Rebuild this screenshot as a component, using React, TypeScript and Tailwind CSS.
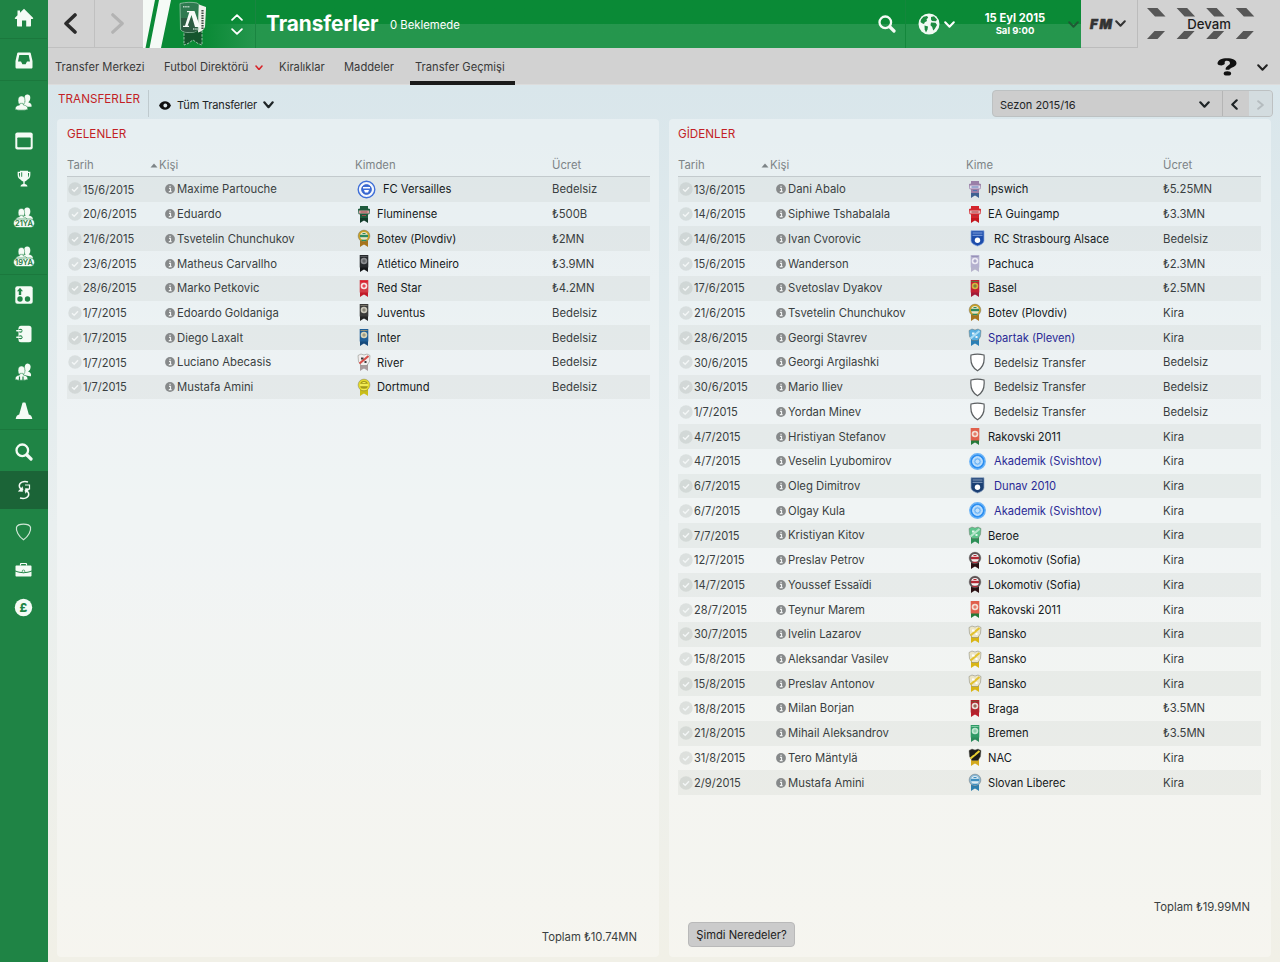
import React from "react";
import clsx from "clsx";

type CrestShape = "rect" | "round" | "tee" | "shield" | "disc" | "badge" | "blank";
type Club = { shape: CrestShape; main: string; accent: string; tail: string; band?: string };

const clubs: Record<string, Club> = {
  "FC Versailles": { shape: "disc", main: "#3f6fd8", accent: "#e8effb", tail: "#2456c4", band: "#2456c4" },
  Fluminense: { shape: "tee", main: "#1f5a3c", accent: "#d8a5a5", tail: "#123c2a", band: "#9c4a4a" },
  "Botev (Plovdiv)": { shape: "round", main: "#c9a227", accent: "#e9e2c4", tail: "#a8741c", band: "#2c8a5e" },
  "Atlético Mineiro": { shape: "rect", main: "#26292c", accent: "#8b8d90", tail: "#141618", band: "#55585b" },
  "Red Star": { shape: "rect", main: "#d33a45", accent: "#f6e3e3", tail: "#c11a28", band: "#e11b2b" },
  Juventus: { shape: "rect", main: "#3b3b3a", accent: "#c9c6b8", tail: "#252525", band: "#777468" },
  Inter: { shape: "rect", main: "#1f5e96", accent: "#d9d4b8", tail: "#164a7b", band: "#8f8e78" },
  River: { shape: "shield", main: "#f1eeee", accent: "#3f3a3d", tail: "#a89a9c", band: "#d8504a" },
  Dortmund: { shape: "round", main: "#e5da28", accent: "#a39a1c", tail: "#c9bd18", band: "#f1ea55" },
  Ipswich: { shape: "tee", main: "#9a7fa8", accent: "#e3dcee", tail: "#3f6291", band: "#5377b1" },
  "EA Guingamp": { shape: "tee", main: "#d4252c", accent: "#e8bcbc", tail: "#c3161d", band: "#a7353a" },
  "RC Strasbourg Alsace": { shape: "badge", main: "#1d4dab", accent: "#ffffff", tail: "#1d4dab", band: "#86a6e0" },
  Pachuca: { shape: "rect", main: "#b5b1cf", accent: "#eceaf4", tail: "#b6b3cc", band: "#9692b8" },
  Basel: { shape: "rect", main: "#c22032", accent: "#d6b13e", tail: "#a11a36", band: "#5f7a3c" },
  "Spartak (Pleven)": { shape: "shield", main: "#58aee0", accent: "#e7f4fb", tail: "#2b7fb5", band: "#a9dcf5" },
  "Bedelsiz Transfer": { shape: "blank", main: "#ffffff", accent: "#5b5f61", tail: "#ffffff" },
  "Rakovski 2011": { shape: "rect", main: "#e0604c", accent: "#f3dfd3", tail: "#257a3a", band: "#e0604c" },
  "Akademik (Svishtov)": { shape: "disc", main: "#2b8ef0", accent: "#9fd0fb", tail: "#2b8ef0" },
  "Dunav 2010": { shape: "badge", main: "#1a3f73", accent: "#ffffff", tail: "#1a3f73", band: "#8ea4c2" },
  Beroe: { shape: "shield", main: "#5fc48c", accent: "#e2f5ea", tail: "#2c8f56", band: "#b5e5ca" },
  "Lokomotiv (Sofia)": { shape: "round", main: "#5e5254", accent: "#f3efef", tail: "#2a1013", band: "#b32a36" },
  Bansko: { shape: "shield", main: "#ece5c6", accent: "#ffffff", tail: "#d9b514", band: "#e3c22d" },
  Braga: { shape: "rect", main: "#b0252e", accent: "#eadcd8", tail: "#b9202c", band: "#7f4b33" },
  Bremen: { shape: "rect", main: "#2f9a66", accent: "#bfe6d0", tail: "#2a8a5a", band: "#7cc9a0" },
  NAC: { shape: "shield", main: "#1d1d1b", accent: "#1d1d1b", tail: "#d3a91e", band: "#e8cf32" },
  "Slovan Liberec": { shape: "round", main: "#8ab8d4", accent: "#dcebf4", tail: "#2d7fb0", band: "#3f8fc0" },
};

const isWide = (s: CrestShape) => s === "disc" || s === "badge" || s === "blank";

function Crest({ name }: { name: string }) {
  const c = clubs[name];
  if (c.shape === "disc") {
    const ring = !c.band;
    return (
      <svg width="19" height="19" viewBox="0 0 19 19" className="shrink-0">
        <circle cx="9.5" cy="9.5" r={ring ? 7.7 : 8.3} fill={ring ? c.main : "#f3f7fd"} stroke={ring ? "#6cb4f7" : c.main} strokeWidth="1.4" />
        <circle cx="9.5" cy="9.5" r="4.8" fill={ring ? c.accent : c.main} stroke={ring ? "#e4f2fe" : "#2456c4"} strokeWidth="1" />
        {ring ? (
          <circle cx="9.5" cy="9.5" r="2.6" fill="#bfe0fc" stroke="#4ea2f2" strokeWidth="0.8" />
        ) : (
          <path d="M6 7h7v1.600H6zM7 10h5l-1 2.6H8z" fill="#fff" />
        )}
      </svg>
    );
  }
  if (c.shape === "badge") {
    return (
      <svg width="19" height="19" viewBox="0 0 19 19" className="shrink-0">
        <path d="M3 1.800h13v9.500c0 3-3 4.500-6.500 5.700C6 15.800 3 14.300 3 11.300z" fill={c.main} stroke={c.band} strokeWidth="0.7" />
        <path d="M4.500 4h10M4.500 6.300h10" stroke={c.band} strokeWidth="1" />
        <circle cx="9.500" cy="11.300" r="2.700" fill={c.accent} />
      </svg>
    );
  }
  if (c.shape === "blank") {
    return (
      <svg width="19" height="19" viewBox="0 0 19 19" className="shrink-0">
        <path d="M3 2c4-1.200 9-1.200 13 0 .7 6-.7 12.500-6.500 15.800C3.700 14.500 2.300 8 3 2z" fill="#fff" stroke={c.accent} strokeWidth="1.200" />
      </svg>
    );
  }
  return (
    <svg width="14" height="19" viewBox="0 0 14 19" className="shrink-0">
      <path d="M3 8h8v10l-1.800-1.200L7 15.500l-2.200 1.300L3 18z" fill={c.tail} />
      {c.shape === "rect" && (
        <g>
          <path d="M2.700 1h8.600v12.500H2.700z" fill={c.main} />
          <circle cx="7" cy="7" r="3.300" fill={c.accent} />
          <path d="M3.500 2.500h7M7 5.200v3.600M5.200 7h3.600" stroke={c.band} strokeWidth="1.100" fill="none" />
        </g>
      )}
      {c.shape === "round" && (
        <g>
          <circle cx="7" cy="7" r="5.900" fill={c.main} stroke="#555" strokeOpacity="0.500" strokeWidth="0.700" />
          <circle cx="7" cy="7" r="3.900" fill={c.accent} />
          <path d="M3 7h8" stroke={c.band} strokeWidth="2.400" />
          <path d="M5.500 4.500h3M4.500 11.300h5" stroke={c.band} strokeWidth="1.200" />
        </g>
      )}
      {c.shape === "tee" && (
        <g>
          <path d="M3 1h8v2.500l2 .5-.5 5-1.500.5v3.500H3V9.500L1.500 9 1 4l2-.5z" fill={c.main} />
          <path d="M2 5.500h10v3H2z" fill={c.accent} />
          <path d="M3.500 7h7M5 10.500h4" stroke={c.band} strokeWidth="1.200" />
        </g>
      )}
      {c.shape === "shield" && (
        <g>
          <path d="M1 2.500 4 1l3 1 3-1 3 1.500-.5 6L10 12.500H4L1.500 8.500z" fill={c.main} stroke="#6b6b60" strokeOpacity="0.600" strokeWidth="0.700" />
          <path d="M2.500 10.500 11.500 3" stroke={c.band} strokeWidth="2.200" />
          <path d="M4 4.500h2.500v2H4zM7.500 8h2v2h-2z" fill={c.accent} />
        </g>
      )}
    </svg>
  );
}

type Row = { date: string; name: string; club: string; fee: string; link?: boolean };

const r = (date: string, name: string, club: string, fee: string, link?: boolean): Row => ({ date, name, club, fee, link });

const incoming: Row[] = [
  r("15/6/2015", "Maxime Partouche", "FC Versailles", "Bedelsiz"),
  r("20/6/2015", "Eduardo", "Fluminense", "₺500B"),
  r("21/6/2015", "Tsvetelin Chunchukov", "Botev (Plovdiv)", "₺2MN"),
  r("23/6/2015", "Matheus Carvallho", "Atlético Mineiro", "₺3.9MN"),
  r("28/6/2015", "Marko Petkovic", "Red Star", "₺4.2MN"),
  r("1/7/2015", "Edoardo Goldaniga", "Juventus", "Bedelsiz"),
  r("1/7/2015", "Diego Laxalt", "Inter", "Bedelsiz"),
  r("1/7/2015", "Luciano Abecasis", "River", "Bedelsiz"),
  r("1/7/2015", "Mustafa Amini", "Dortmund", "Bedelsiz"),
];

const outgoing: Row[] = [
  r("13/6/2015", "Dani Abalo", "Ipswich", "₺5.25MN"),
  r("14/6/2015", "Siphiwe Tshabalala", "EA Guingamp", "₺3.3MN"),
  r("14/6/2015", "Ivan Cvorovic", "RC Strasbourg Alsace", "Bedelsiz"),
  r("15/6/2015", "Wanderson", "Pachuca", "₺2.3MN"),
  r("17/6/2015", "Svetoslav Dyakov", "Basel", "₺2.5MN"),
  r("21/6/2015", "Tsvetelin Chunchukov", "Botev (Plovdiv)", "Kira"),
  r("28/6/2015", "Georgi Stavrev", "Spartak (Pleven)", "Kira", true),
  r("30/6/2015", "Georgi Argilashki", "Bedelsiz Transfer", "Bedelsiz"),
  r("30/6/2015", "Mario Iliev", "Bedelsiz Transfer", "Bedelsiz"),
  r("1/7/2015", "Yordan Minev", "Bedelsiz Transfer", "Bedelsiz"),
  r("4/7/2015", "Hristiyan Stefanov", "Rakovski 2011", "Kira"),
  r("4/7/2015", "Veselin Lyubomirov", "Akademik (Svishtov)", "Kira", true),
  r("6/7/2015", "Oleg Dimitrov", "Dunav 2010", "Kira", true),
  r("6/7/2015", "Olgay Kula", "Akademik (Svishtov)", "Kira", true),
  r("7/7/2015", "Kristiyan Kitov", "Beroe", "Kira"),
  r("12/7/2015", "Preslav Petrov", "Lokomotiv (Sofia)", "Kira"),
  r("14/7/2015", "Youssef Essaïdi", "Lokomotiv (Sofia)", "Kira"),
  r("28/7/2015", "Teynur Marem", "Rakovski 2011", "Kira"),
  r("30/7/2015", "Ivelin Lazarov", "Bansko", "Kira"),
  r("15/8/2015", "Aleksandar Vasilev", "Bansko", "Kira"),
  r("15/8/2015", "Preslav Antonov", "Bansko", "Kira"),
  r("18/8/2015", "Milan Borjan", "Braga", "₺3.5MN"),
  r("21/8/2015", "Mihail Aleksandrov", "Bremen", "₺3.5MN"),
  r("31/8/2015", "Tero Mäntylä", "NAC", "Kira"),
  r("2/9/2015", "Mustafa Amini", "Slovan Liberec", "Kira"),
];

function Chevron({ dir, w, h, sw = 2, className }: { dir: "up" | "down" | "left" | "right"; w: number; h: number; sw?: number; className?: string }) {
  const p = sw / 2 + 0.2;
  const d = {
    down: `M${p} ${p}L${w / 2} ${h - p}L${w - p} ${p}`,
    up: `M${p} ${h - p}L${w / 2} ${p}L${w - p} ${h - p}`,
    left: `M${w - p} ${p}L${p} ${h / 2}L${w - p} ${h - p}`,
    right: `M${p} ${p}L${w - p} ${h / 2}L${p} ${h - p}`,
  }[dir];
  return (
    <svg width={w} height={h} viewBox={`0 0 ${w} ${h}`} className={clsx("shrink-0", className)}>
      <path d={d} fill="none" stroke="currentColor" strokeWidth={sw} strokeLinecap="round" strokeLinejoin="round" />
    </svg>
  );
}

function SearchGlyph() {
  return (
    <svg width="18" height="18" viewBox="0 0 18 18" className="shrink-0">
      <circle cx="7.300" cy="7.300" r="5.800" fill="none" stroke="#f4fbf5" strokeWidth="2.300" />
      <path d="M12 12l4 4" stroke="#f4fbf5" strokeWidth="3.200" strokeLinecap="round" />
    </svg>
  );
}

function Person({ x, y, s = 1 }: { x: number; y: number; s?: number }) {
  return (
    <g transform={`translate(${x} ${y}) scale(${s})`}>
      <ellipse cx="6" cy="4.300" rx="3.300" ry="4.300" />
      <path d="M0 12.500c0-2.500 1.500-3.500 4.300-4l.2-1.500h3l.2 1.500c2.800.5 4.300 1.500 4.300 4 0 1.300-12 1.300-12 0z" />
    </g>
  );
}

function People() {
  return (
    <svg width="18" height="17" viewBox="0 0 18 17" fill="#f4fbf5">
      <g transform="rotate(8 12 7)"><Person x={6.500} y={0.500} s={0.900} /></g>
      <g stroke="#1f8445" strokeWidth="0.500"><Person x={0.200} y={2} s={1.050} /></g>
    </svg>
  );
}

function YouthSquad({ label }: { label: string }) {
  return (
    <svg width="24" height="22" viewBox="0 0 24 22">
      <g fill="#f4fbf5">
        <Person x={9.500} y={0.500} s={0.950} />
        <g stroke="#1f8445" strokeWidth="0.500"><Person x={3.500} y={1.500} s={0.980} /></g>
        <rect x="1.500" y="12" width="21" height="8.500" rx="4.200" stroke="#1f8445" strokeWidth="0.600" />
      </g>
      <text x="12" y="18.900" fontSize="7.500" fontWeight="600" textAnchor="middle" fill="#1f7a40" fontFamily="Inter, sans-serif">{label}</text>
    </svg>
  );
}

function NavItem({ children, className }: { children: React.ReactNode; className?: string }) {
  return <div className={clsx("flex shrink-0 items-center justify-center", className)}>{children}</div>;
}

function Sidebar() {
  const w = "#f4fbf5";
  const g = "#1f8445";
  return (
    <nav className="flex h-[962px] w-12 shrink-0 flex-col bg-[#1f8445] pr-px">
      <NavItem className="h-[38px] pb-[3px]">
        <svg width="20" height="19" viewBox="0 0 20 19" fill={w}>
          <path d="M10 .8 19 9.800c.5.600.2 1.200-.5 1.200H17v6.500c0 .6-.4 1-1 1h-3.800V12.500H8v6H4c-.6 0-1-.4-1-1V11H1.500C.8 11 .5 10.400 1 9.800L3.500 7.300V2.500H6v2.300z" />
        </svg>
      </NavItem>
      <NavItem className="h-[42px] border-t border-[#1b783d] pt-[2px]">
        <svg width="18" height="17" viewBox="0 0 18 17">
          <path d="M3.500.5h11c.8 0 1.100.4 1.300 1L17.500 9v6c0 1-.5 1.500-1.500 1.500H2C1 16.500.5 16 .5 15V9l1.700-7.500c.2-.6.500-1 1.300-1z" fill={w} />
          <path d="M4.300 3h9.400l1.300 6.500h-3l-1.400 2.800H7.400L6 9.500H3z" fill={g} />
        </svg>
      </NavItem>
      <div className="flex h-[194px] flex-col border-t border-[#1b783d] pt-[2px]">
        <NavItem className="h-[38.7px]"><People /></NavItem>
        <NavItem className="h-[38.7px] pb-px">
          <svg width="18" height="18" viewBox="0 0 18 18">
            <rect x="0.300" y="0.500" width="17.400" height="17" rx="2" fill={w} />
            <rect x="2.300" y="5.500" width="13.400" height="9.800" rx="0.800" fill={g} />
          </svg>
        </NavItem>
        <NavItem className="h-[38.7px] pb-px">
          <svg width="14" height="18" viewBox="0 0 14 18">
            <path d="M3 .8h8V7c0 2.500-1.500 4-3.300 4.500v2.500c1.500.3 2.600 1 2.800 2.600h-7c.2-1.600 1.300-2.300 2.800-2.600v-2.500C4.500 11 3 9.500 3 7z" fill={w} />
            <path d="M3 2.300H1.300v2.500C1.300 7 2.500 8.500 4.300 9M11 2.300h1.700v2.500c0 2.200-1.200 3.700-3 4.200" fill="none" stroke={w} strokeWidth="1.300" />
            <path d="M4.700 2.300v4.500" stroke={g} strokeWidth="0.900" />
          </svg>
        </NavItem>
        <NavItem className="h-[38.7px]"><YouthSquad label="21YA" /></NavItem>
        <NavItem className="h-[38.7px]"><YouthSquad label="19YA" /></NavItem>
      </div>
      <div className="flex h-[155px] flex-col border-t border-[#1b783d] pt-px">
        <NavItem className="h-[38.7px]">
          <svg width="18" height="18" viewBox="0 0 18 18">
            <rect x="0.300" y="0.300" width="17.400" height="17.400" rx="2" fill={w} />
            <path d="M5 1.800 8 5.300H6.200V9H3.800V5.300H2z" fill={g} />
            <circle cx="5" cy="13" r="2.700" fill={g} /><circle cx="12.500" cy="13" r="2.700" fill={g} />
          </svg>
        </NavItem>
        <NavItem className="h-[38.7px]">
          <svg width="16" height="18" viewBox="0 0 16 18">
            <rect x="2.500" y="0.700" width="13" height="16.600" rx="2.500" fill={w} />
            <g fill={g}><circle cx="4.500" cy="5.800" r="2" /><circle cx="4.500" cy="12.200" r="2" /></g>
            <path d="M.8 5.800H5M.8 12.200H5" stroke={w} strokeWidth="1.500" strokeLinecap="round" />
          </svg>
        </NavItem>
        <NavItem className="h-[38.7px]">
          <svg width="18" height="19" viewBox="0 0 18 19" fill={w}>
            <g transform="rotate(14 12 7)"><Person x={6.500} y={0.500} s={0.900} /></g>
            <g stroke={g} strokeWidth="0.500"><Person x={0.200} y={3} s={1.050} /></g>
            <path d="M4.500 13.500v4M8 13.500v4" stroke={g} strokeWidth="1.200" />
          </svg>
        </NavItem>
        <NavItem className="h-[38.7px] pb-px">
          <svg width="18" height="18" viewBox="0 0 18 18" fill={w}>
            <path d="M7.500.8c.8-.4 2.200-.4 3 0l3.300 11.700c1.800.3 3.200 1.700 3.500 4.500H.7c.3-2.800 1.700-4.200 3.500-4.500z" />
          </svg>
        </NavItem>
      </div>
      <NavItem className="h-[42px] border-t border-[#1b783d] pt-[2px]"><SearchGlyph /></NavItem>
      <NavItem className="-mr-px h-[38px] bg-[#1b6437] pr-px">
        <svg width="14" height="20" viewBox="0 0 14 20">
          <path d="M11 2C6.500.8 2.300 2.300 2.300 5.800c0 2.200 1.800 3.300 4 3.700" fill="none" stroke={w} strokeWidth="1.500" />
          <path d="M3 18c4.500 1.200 8.700-.3 8.700-3.800 0-2.200-1.800-3.300-4-3.700" fill="none" stroke={w} strokeWidth="1.500" />
          <path d="M5.800 6.200v5.600L.8 11.500zM8.200 13.800V8.200l5 .3z" fill={w} />
          <path d="M8 5h4.500v4.500" fill="none" stroke={w} strokeWidth="1.200" />
        </svg>
      </NavItem>
      <NavItem className="mt-[4px] h-[38px]">
        <svg width="17" height="18" viewBox="0 0 17 18">
          <path d="M8.500 1.200C5 1.200 2.300 2 1.500 4.200c-.8 3.500 2 9 7 12.600 5-3.600 7.800-9.100 7-12.600-.8-2.200-3.500-3-7-3z" fill="none" stroke="#cfe6d6" strokeWidth="1.200" />
        </svg>
      </NavItem>
      <NavItem className="h-[38px]">
        <svg width="17" height="14" viewBox="0 0 17 14">
          <path d="M5.500 2.500V1.300c0-.5.300-.8.800-.8h4.400c.5 0 .8.300.8.800v1.200" fill="none" stroke={w} strokeWidth="1.200" />
          <path d="M1.500 2.500h14c.6 0 1 .4 1 1v4c-5 2.300-11 2.300-16 0v-4c0-.6.400-1 1-1zM.5 8.500c5 2.200 11 2.200 16 0v4c0 .6-.4 1-1 1h-14c-.6 0-1-.4-1-1z" fill={w} />
          <circle cx="8.500" cy="8.300" r="1.300" fill={w} stroke={g} strokeWidth="0.700" />
        </svg>
      </NavItem>
      <NavItem className="h-[38px] pb-px">
        <svg width="19" height="19" viewBox="0 0 19 19">
          <circle cx="9.500" cy="9.500" r="8.700" fill={w} />
          <text x="9.500" y="13.700" fontSize="12" fontWeight="800" textAnchor="middle" fill={g} fontFamily="Inter, sans-serif">£</text>
        </svg>
      </NavItem>
    </nav>
  );
}

function ClubBanner() {
  return (
    <svg width="112" height="48" viewBox="0 0 112 48" className="shrink-0">
      <defs>
        <linearGradient id="sheen" x1="0" x2="1" y1="0" y2="0">
          <stop offset="0" stopColor="#0a8a36" />
          <stop offset="0.550" stopColor="#0a8a36" />
          <stop offset="1" stopColor="#0a8a36" stopOpacity="0" />
        </linearGradient>
      </defs>
      <path d="M0 24h112v24H0z" fill="url(#sheen)" />
      <path d="M0 0h12L2.500 48H0zM16 0h12L18 48H6.500z" fill="#f5faf6" />
      <path d="M41 30h18v15l-4-1.500-5-3.500-5 3.500-4 1.500z" fill="#14552d" stroke="#b5d8c1" strokeWidth="0.800" strokeDasharray="2.500 1.200" />
      <path d="M37 3.500c6-1.500 12-1.500 17-.5l2 1.500-1 24c-1 3-3 4-9 4-4 0-7-1-8.500-3z" fill="#2f7a50" stroke="#9cc3ab" strokeWidth="0.800" />
      <path d="M38 18h17l-.5 12c-2 3-13 3-16 0z" fill="#2c5b41" />
      <path d="M56 4.500 63 7v2l-1 18c-1 3-4 4.500-7 5.500z" fill="#eef1ea" />
      <path d="M59.500 10v20" stroke="#3f4a44" strokeWidth="2.200" strokeDasharray="1.600 0.900" />
      <path d="M40 6.800h7M50 29h6" stroke="#bcd3c5" strokeWidth="1.600" strokeDasharray="1.500 .7" />
      <path d="M40 27h6v-1.300h-1.300L48.500 15l3.500 12h6v-1.300h-1.300L51.500 11H44v1.300h2.300L42 25.700h-2z" fill="#f7faf7" />
    </svg>
  );
}

function Globe() {
  return (
    <svg width="22" height="22" viewBox="0 0 22 22" className="shrink-0">
      <circle cx="11" cy="11" r="10.500" fill="#f2faf4" />
      <g fill="#1c8c41">
        <path d="M3 6.500 5.500 3.700 9 3l1.200 1.500L8.500 6.500l.5 1.500-2.200 1.200L6 11l-2-.8L2.500 9z" />
        <path d="M6.500 12.500 10 13.500l-.5 3L8 19.500l-1.300-3z" />
        <path d="M13 4l3-.8 3 3.300-1 1.800L14 8l-1-1.500z" />
        <path d="M13 9.500l4.500.3L19 12l-2.300 4L15.200 17.500l-1-3.500-1.700-1.800z" />
      </g>
    </svg>
  );
}

function TopBar() {
  return (
    <header className="flex h-12 shrink-0">
      <div className="flex h-12 w-[47px] items-center justify-center border-r border-b border-[#c0c0c0] bg-[#d2d2d2] pr-px text-[#2b2b2b]">
        <Chevron dir="left" w={13} h={21} sw={3.6} />
      </div>
      <div className="flex h-12 w-12 items-center justify-center border-b border-[#c0c0c0] bg-[#d2d2d2] pr-[3px] text-[#b3b3b3]">
        <Chevron dir="right" w={13} h={21} sw={3.2} />
      </div>
      <div className="flex h-12 w-[938px] items-center bg-linear-to-b from-[#0a8a36] from-50% to-[#25964d] to-50% text-white">
        <div className="flex h-12 items-center border-r border-[#1a8541]">
          <ClubBanner />
        </div>
        <div className="-ml-[25px] flex w-3 flex-col items-center gap-[7px]">
          <Chevron dir="up" w={12} h={7} sw={1.8} />
          <Chevron dir="down" w={12} h={7} sw={1.8} />
        </div>
        <h1 className="ml-[23px] w-[124px] text-[20.800px] leading-6 font-bold tracking-[-0.050px]">Transferler</h1>
        <span className="pt-[2px] text-[11.300px]">0 Beklemede</span>
        <div className="ml-auto flex h-12 w-[28px] items-center border-r border-[#14873c] pr-[9px]"><SearchGlyph /></div>
        <div className="ml-[12px] flex items-center gap-[4px]">
          <Globe />
          <Chevron dir="down" w={11} h={7} sw={2} />
        </div>
        <div className="ml-[11px] flex w-[98px] flex-col items-center pt-[1px] font-bold">
          <span className="text-[11.200px] leading-[13px]">15 Eyl 2015</span>
          <span className="text-[9.500px] leading-[12px]">Sal 9:00</span>
        </div>
        <div className="mr-[2px] ml-[4px] flex text-[#1f5a35]"><Chevron dir="down" w={11} h={7} sw={2} /></div>
      </div>
      <div className="flex h-12 w-[57px] items-center justify-center gap-[2px] border-r border-b border-[#bcbcbc] bg-[#d2d2d2] pr-px text-[#333]">
        <svg width="22" height="14" viewBox="0 0 22 14" className="overflow-visible">
          <text x="-1" y="11.500" fontSize="13" fontWeight="900" fontStyle="italic" fill="#333" stroke="#333" strokeWidth="0.600" textLength="22" fontFamily="Inter, sans-serif">FM</text>
        </svg>
        <Chevron dir="down" w={11} h={7} sw={2} />
      </div>
      <div className="relative flex h-12 w-[142px] items-center justify-center bg-[#d2d2d2] text-[13.200px] font-medium text-[#1d1d1d]">
        <svg width="142" height="48" viewBox="0 0 142 48" className="absolute inset-0" fill="#575757">
          {[0, 29.6, 59.2, 88.8].map((x) => (
            <path key={x} d={`M${9 + x} 8h10.500l8 8.500h-10.500zM${16.500 + x} 31h10.500l-7.500 8h-10.500z`} />
          ))}
        </svg>
        <span className="relative pt-px">Devam</span>
      </div>
    </header>
  );
}

function Tabs() {
  return (
    <div className="flex h-[37px] shrink-0 items-stretch border-b border-[#dcdcdc] bg-[#d2d2d2] pl-[7px] text-[11.200px] text-[#3a3a3a]">
      <div className="flex w-[109px] items-center pt-[3px]">Transfer Merkezi</div>
      <div className="flex w-[115px] items-center pt-[3px]">
        <span className="w-[91px]">Futbol Direktörü</span>
        <Chevron dir="down" w={8} h={5.5} sw={1.6} className="text-[#d8242a]" />
      </div>
      <div className="flex w-[65px] items-center pt-[3px]">Kiralıklar</div>
      <div className="flex w-[66px] items-center pt-[3px]">Maddeler</div>
      <div className="-mb-px flex w-[105px] items-center border-b-4 border-[#1a1a1a] pt-[6px] pl-[5px]">Transfer Geçmişi</div>
      <div className="ml-auto flex items-center gap-[20px] pt-[2px] pr-[12px] text-[#222]">
        <svg width="20" height="18" viewBox="0 0 20 18">
          <path d="M.5 5.500C.8 2 4.500.3 10 .3s9.500 1.600 9.500 4.900c0 3.300-4.500 4-7 5.800v.8H8.700c-.7-3.500 4.300-4.300 4.300-6.500 0-1.700-1.200-2.500-3-2.500-1.500 0-2.500.6-2.300 1.800.6 1.800-1 2.800-3.200 2.800S.4 6.800.5 5.500z" fill="#111" />
          <ellipse cx="10.400" cy="15.400" rx="3.700" ry="2.200" fill="#111" />
        </svg>
        <Chevron dir="down" w={11} h={7} sw={2} />
      </div>
    </div>
  );
}

function FilterBar() {
  return (
    <div className="flex h-[34px] shrink-0 items-start text-[11.300px] text-[#1e2426]">
      <div className="w-[100px] pt-[6px] pl-[10px] text-[11.700px] leading-4 text-[#c31f26]">TRANSFERLER</div>
      <div className="mt-[5px] flex h-[27px] items-center border-l border-[#bfcace] pt-[3px] pl-[10px]">
        <svg width="12" height="9" viewBox="0 0 12 9">
          <path d="M0 4.500C1.500 1.500 3.500.300 6 .300s4.500 1.200 6 4.200c-1.500 3-3.500 4.200-6 4.200S1.500 7.500 0 4.500z" fill="#111" />
          <circle cx="6.300" cy="4.500" r="1.900" fill="#dfe9ec" />
        </svg>
        <span className="ml-[6px] w-[86px] text-[11px] tracking-[-0.180px] whitespace-nowrap">Tüm Transferler</span>
        <Chevron dir="down" w={11} h={7.5} sw={2.200} />
      </div>
      <div className="mt-[5px] mr-[7px] ml-auto flex h-[27px] w-[281px] overflow-hidden rounded border border-[#bdc1c2] bg-[#cdcdcd]">
        <div className="flex w-[230px] items-center justify-between border-r border-[#b5b5b5] pr-[12px] pl-[7px]">
          <span className="pt-[3px] text-[11px]">Sezon 2015/16</span>
          <Chevron dir="down" w={11} h={7} sw={2.200} className="mt-[2px]" />
        </div>
        <div className="flex w-[26px] items-center justify-center pr-[3px] pt-[2px]"><Chevron dir="left" w={7} h={11} sw={2.200} /></div>
        <div className="flex grow items-center justify-center bg-[#d3dcdf] pt-[2px] text-[#b5bcbf]"><Chevron dir="right" w={7} h={10} sw={2} /></div>
      </div>
    </div>
  );
}

function TransferTable({ clubHeader, rows }: { clubHeader: string; rows: Row[] }) {
  return (
    <div className="w-[583px] text-[11.300px] text-[#3a3f41]">
      <div className="grid h-[25px] grid-cols-[92px_196px_197px_1fr] items-center border-b border-[#c3cacd] pt-[3px] text-[#7d8487]">
        <div className="flex items-center justify-between">
          Tarih
          <svg width="8" height="5" viewBox="0 0 8 5" className="mr-px"><path d="M4 .500 7.500 4.500h-7z" fill="#7d8487" /></svg>
        </div>
        <div>Kişi</div>
        <div>{clubHeader}</div>
        <div>Ücret</div>
      </div>
      {rows.map((row, i) => (
        <div key={i} className={clsx("grid h-[24.72px] grid-cols-[92px_196px_197px_1fr] items-center", i % 2 === 0 && "bg-[#50604f]/6")}>
          <div className="flex items-center gap-[1px] pl-[1px] text-[11.100px]">
            <svg width="14" height="14" viewBox="0 0 14 14">
              <circle cx="7" cy="7" r="6.700" fill="#9aa3a0" fillOpacity="0.250" />
              <path d="M4 7.300 6.200 9.300 10 5.200" fill="none" stroke="#f3f6f6" strokeWidth="1.400" />
            </svg>
            <span className="pt-px">{row.date}</span>
          </div>
          <div className="flex items-center gap-[2px] pl-[6px]">
            <svg width="10" height="10" viewBox="0 0 10 10">
              <circle cx="5" cy="5" r="4.900" fill="#86898a" />
              <path d="M4 4.300h1.500v3.200M3.800 7.700h2.800M4.500 2.300h1.100" fill="none" stroke="#f1f3f3" strokeWidth="1.200" />
            </svg>
            <span className="pt-px">{row.name}</span>
          </div>
          <div className={clsx("flex items-center pl-[2px] text-[11.150px]", isWide(clubs[row.club].shape) ? "gap-[7px]" : "gap-[6px]")}>
            <Crest name={row.club} />
            <span className={clsx("pt-px", row.link ? "text-[#2a2a96]" : row.club === "Bedelsiz Transfer" ? "text-[#3a3f41]" : "text-[#15191b]")}>{row.club}</span>
          </div>
          <div className="pt-px">{row.fee}</div>
        </div>
      ))}
    </div>
  );
}

function Panel({ title, clubHeader, rows, className, children }: { title: string; clubHeader: string; rows: Row[]; className: string; children: React.ReactNode }) {
  return (
    <section className={clsx("flex w-[602px] flex-col rounded bg-white/35", className)}>
      <h2 className="h-[33px] pt-[7px] text-[11.700px] leading-4 text-[#c31f26]">{title}</h2>
      <TransferTable clubHeader={clubHeader} rows={rows} />
      {children}
    </section>
  );
}

export default function App() {
  return (
    <div className="flex h-[962px] w-[1280px] overflow-hidden font-[Inter,'Noto_Sans',sans-serif]">
      <Sidebar />
      <div className="flex min-w-0 grow flex-col">
        <TopBar />
        <Tabs />
        <main className="flex grow flex-col bg-linear-to-b from-[#d9e6eb] via-[#e9efef] via-50% to-[#f1f0e7]">
          <FilterBar />
          <div className="flex h-[838px] gap-[10px] pl-[9px]">
            <Panel title="GELENLER" clubHeader="Kimden" rows={incoming} className="pl-[10px]">
              <div className="mt-auto mr-[22px] mb-[12px] self-end text-[11.300px] leading-4 text-[#3a3f41]">Toplam ₺10.74MN</div>
            </Panel>
            <Panel title="GİDENLER" clubHeader="Kime" rows={outgoing} className="pl-[9px]">
              <div className="mt-auto mr-[21px] self-end text-[11.300px] leading-4 text-[#3a3f41]">Toplam ₺19.99MN</div>
              <button className="mt-[7px] mb-[10px] ml-[10px] h-[25px] w-[107px] rounded border border-[#b9b9b9] bg-[#cbcbcb] pt-px text-[11.200px] text-[#222]">Şimdi Neredeler?</button>
            </Panel>
          </div>
        </main>
      </div>
    </div>
  );
}
